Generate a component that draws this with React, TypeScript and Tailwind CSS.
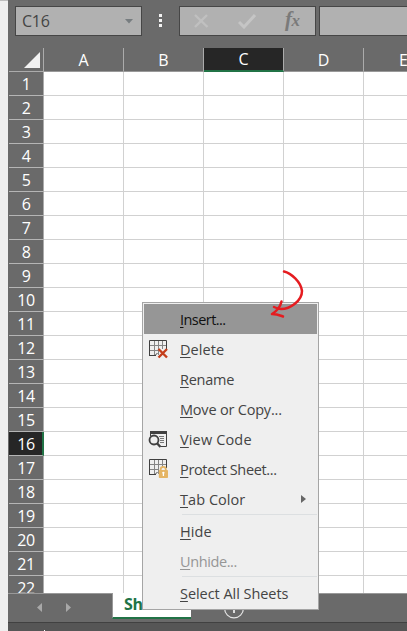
import React from "react";

const columns = ["A", "B", "C", "D", "E"];
const rows = Array.from({ length: 22 }, (_, i) => i + 1);

function GridGlyph() {
  return (
    <>
      <path d="M1 5.5H17M1 10.5H17M5.5 1V15M9.5 1V15M13.5 1V11" fill="none" stroke="#858585" />
      <path d="M.5 16V.5H17.5V13M.5 15.5H7" fill="none" stroke="#3f3f3f" />
      <path d="M6 15.5L8.5 13" stroke="#3f3f3f" />
    </>
  );
}

function DeleteIcon() {
  return (
    <svg width="20" height="19" viewBox="0 0 20 19">
      <GridGlyph />
      <path d="M10 9H18V18H10Z" fill="#efefef" />
      <path d="M9.5 9L18 17.5M18 9L9.5 17.5" stroke="#c43e1c" strokeWidth="2.4" />
    </svg>
  );
}

function CodeIcon() {
  return (
    <svg className="-ml-px" width="20" height="18" viewBox="0 0 20 18">
      <path d="M2 1H19V4H2Z" fill="#404040" />
      <path d="M18.5 3V16.5H12.5M2.5 3V6" fill="none" stroke="#404040" />
      <path d="M11 6.5H16M12 8.5H16M12 10.5H16M12 12.5H16" stroke="#777" />
      <circle cx="6" cy="10" r="4.5" fill="#efefef" stroke="#404040" strokeWidth="1.8" />
      <path d="M9 13.2L12.5 17" stroke="#404040" strokeWidth="2.4" />
    </svg>
  );
}

function ProtectIcon() {
  return (
    <svg width="20" height="20" viewBox="0 0 20 20">
      <GridGlyph />
      <path d="M10 9H19V19H10Z" fill="#efefef" />
      <path d="M11.7 12V10.2C11.7 7 16.8 7 16.8 10.2V12" fill="none" stroke="#e5b565" strokeWidth="1.8" />
      <rect x="9.8" y="11" width="9.2" height="8" rx=".8" fill="#e5b565" />
      <path d="M14.4 13V17" stroke="#fff" strokeWidth="1.3" />
      <circle cx="14.4" cy="13.8" r="1.1" fill="#fff" />
    </svg>
  );
}

type ItemProps = {
  label: string;
  tracking: string;
  icon?: React.ReactNode;
  active?: boolean;
  disabled?: boolean;
  submenu?: boolean;
};

function MenuItem({ label, tracking, icon, active, disabled, submenu }: ItemProps) {
  const color = active ? "bg-[#969696] text-[#111]" : disabled ? "text-[#969696]" : "text-[#444]";
  return (
    <div className={`flex h-[30px] shrink-0 items-center ${color}`}>
      <span className="flex w-9 shrink-0 justify-start pl-[5px]">{icon}</span>
      <span className={`pt-px text-[14.5px] leading-[29px] whitespace-nowrap ${tracking}`}>
        <span className="underline decoration-1 underline-offset-[2px]">{label[0]}</span>
        {label.slice(1)}
      </span>
      {submenu && (
        <svg className="mr-[11px] ml-auto" width="5" height="8" viewBox="0 0 5 8">
          <path d="M0 0L5 4L0 8Z" fill="#666" />
        </svg>
      )}
    </div>
  );
}

function Separator() {
  return <div className="mb-px ml-[38px] h-px shrink-0 bg-[#dcdfe1]" />;
}

function ContextMenu() {
  return (
    <div className="absolute top-[302px] left-[142px] flex h-[308px] w-[177px] flex-col border border-[#a5a5a5] bg-[#efefef] p-px">
      <MenuItem label="Insert..." tracking="tracking-[-0.55px]" active />
      <MenuItem label="Delete" tracking="tracking-[0.05px]" icon={<DeleteIcon />} />
      <MenuItem label="Rename" tracking="tracking-[-0.25px]" />
      <MenuItem label="Move or Copy..." tracking="tracking-[-0.2px]" />
      <MenuItem label="View Code" tracking="tracking-[0.15px]" icon={<CodeIcon />} />
      <MenuItem label="Protect Sheet..." tracking="tracking-[-0.35px]" icon={<ProtectIcon />} />
      <MenuItem label="Tab Color" tracking="tracking-[0.05px]" submenu />
      <Separator />
      <MenuItem label="Hide" tracking="tracking-[0.1px]" />
      <MenuItem label="Unhide..." tracking="tracking-[-0.4px]" disabled />
      <Separator />
      <MenuItem label="Select All Sheets" tracking="tracking-[-0.05px]" />
    </div>
  );
}

function FormulaBar() {
  return (
    <div className="flex h-12 shrink-0 pt-1.5 pl-[7px]">
      <div className="flex h-[30px] w-[127px] shrink-0 items-center justify-between border border-[#464646] bg-[#b1b1b1] pr-2 pl-1.5 text-base tracking-[-0.3px] text-[#444]">
        <span>C16</span>
        <svg width="8" height="5" viewBox="0 0 8 5">
          <path d="M0 0H8L4 4.5Z" fill="#777d80" />
        </svg>
      </div>
      <div className="flex w-[37px] shrink-0 flex-col items-center gap-[2px] pt-2">
        <i className="h-[3px] w-[3px] bg-[#f2f2f2]" />
        <i className="h-[3px] w-[3px] bg-[#f2f2f2]" />
        <i className="h-[3px] w-[3px] bg-[#f2f2f2]" />
      </div>
      <div className="flex h-[30px] w-[137px] shrink-0 items-center border border-[#464646] bg-[#b1b1b1] pl-[14px]">
        <svg width="15" height="14" viewBox="0 0 15 14">
          <path d="M1 1L13.5 13M13 1L1 13" fill="none" stroke="#c0c0c0" strokeWidth="2.4" />
        </svg>
        <svg className="ml-[29px]" width="18" height="15" viewBox="0 0 18 15">
          <path d="M1 8L6 13L17 1" fill="none" stroke="#c5c5c5" strokeWidth="3" />
        </svg>
        <span className="ml-[29px] -translate-y-px font-['Liberation_Serif',serif] text-[21px] font-bold tracking-[-0.5px] text-[#7a7a7a] italic">
          f<span className="text-[17px]">x</span>
        </span>
      </div>
      <div className="ml-[3px] h-[30px] grow border border-r-0 border-[#464646] bg-[#b1b1b1]" />
    </div>
  );
}

function ColumnHeaders() {
  return (
    <div className="flex h-6 shrink-0 pl-px">
      <div className="flex w-[35px] shrink-0 items-end justify-end border-r border-b border-[#ababab] pr-[3px] pb-[3px]">
        <svg width="16" height="16" viewBox="0 0 16 16">
          <path d="M16 0V16H0Z" fill="#f2f2f2" />
        </svg>
      </div>
      {columns.map((c) => (
        <div
          key={c}
          className={`flex w-20 shrink-0 items-center justify-center border-r border-[#ababab] text-base leading-none text-white ${
            c === "C" ? "border-b-2 border-b-[#217346] bg-[#262626]" : "border-b border-b-[#999]"
          }`}
        >
          {c}
        </div>
      ))}
    </div>
  );
}

function SheetRows() {
  return (
    <div className="flex h-[521px] shrink-0 overflow-hidden">
      <div className="w-px shrink-0" />
      <div className="grow bg-white">
        {rows.map((r) => (
          <div key={r} className="flex h-6">
            <div
              className={`flex w-[35px] shrink-0 items-center justify-center border-b border-b-[#b5b5b5] text-base leading-none tracking-[-0.4px] text-white ${
                r === 16
                  ? "border-r-2 border-r-[#217346] bg-[#262626] pl-px"
                  : "border-r border-r-[#ababab] bg-[#6a6a6a]"
              }`}
            >
              {r}
            </div>
            {columns.map((c) => (
              <div key={c} className="w-20 shrink-0 border-r border-b border-[#d1d1d1]" />
            ))}
          </div>
        ))}
      </div>
    </div>
  );
}

function SheetTabs() {
  return (
    <div className="flex h-[29px] shrink-0 border-t border-[#999] bg-[#6a6a6a]">
      <div className="flex w-[104px] shrink-0 pt-[9px] pl-7">
        <svg width="36" height="9" viewBox="0 0 36 9">
          <path d="M6 0V9L1 4.5ZM30 0V9L35 4.5Z" fill="#a8a8a8" />
        </svg>
      </div>
      <div className="-mt-px h-[26px] w-[79px] shrink-0 border-b-2 border-l border-b-[#217346] border-l-[#999] bg-white pl-[11px] text-base leading-[23px] font-bold tracking-[-0.4px] text-[#217346]">
        Sheet1
      </div>
      <svg className="mt-1 ml-8" width="22" height="22" viewBox="0 0 22 22">
        <circle cx="11" cy="10.5" r="9.4" fill="none" stroke="#e5e5e5" strokeWidth="1.2" />
        <path d="M11 6V15M6.5 10.5H15.5" stroke="#f2f2f2" strokeWidth="1.7" />
      </svg>
    </div>
  );
}

export default function App() {
  return (
    <div className="relative flex h-[631px] w-[407px] overflow-hidden bg-[#efefef] font-['Open_Sans','Noto_Sans',sans-serif]">
      <div className="w-2 shrink-0 border-t border-[#bdbdbd]" />
      <div className="flex min-w-0 grow flex-col overflow-hidden bg-[#6a6a6a]">
        <FormulaBar />
        <ColumnHeaders />
        <SheetRows />
        <SheetTabs />
        <div className="flex grow items-end border-t border-[#414141] bg-[#565656] pl-9">
          <i className="h-px w-px bg-white" />
        </div>
      </div>
      <ContextMenu />
      <svg className="absolute top-[268px] left-[268px]" width="40" height="54" viewBox="0 0 40 54">
        <path
          d="M16 3.5C23 5 33 14 34 23C34 33 22 41 13 41C10 41 8 40 6 39M13.5 33.5C12 40 9 43 4 46C9 46 11 47 15 48.5"
          fill="none"
          stroke="#e51c20"
          strokeWidth="2.5"
          strokeLinecap="round"
          strokeLinejoin="round"
        />
      </svg>
    </div>
  );
}
